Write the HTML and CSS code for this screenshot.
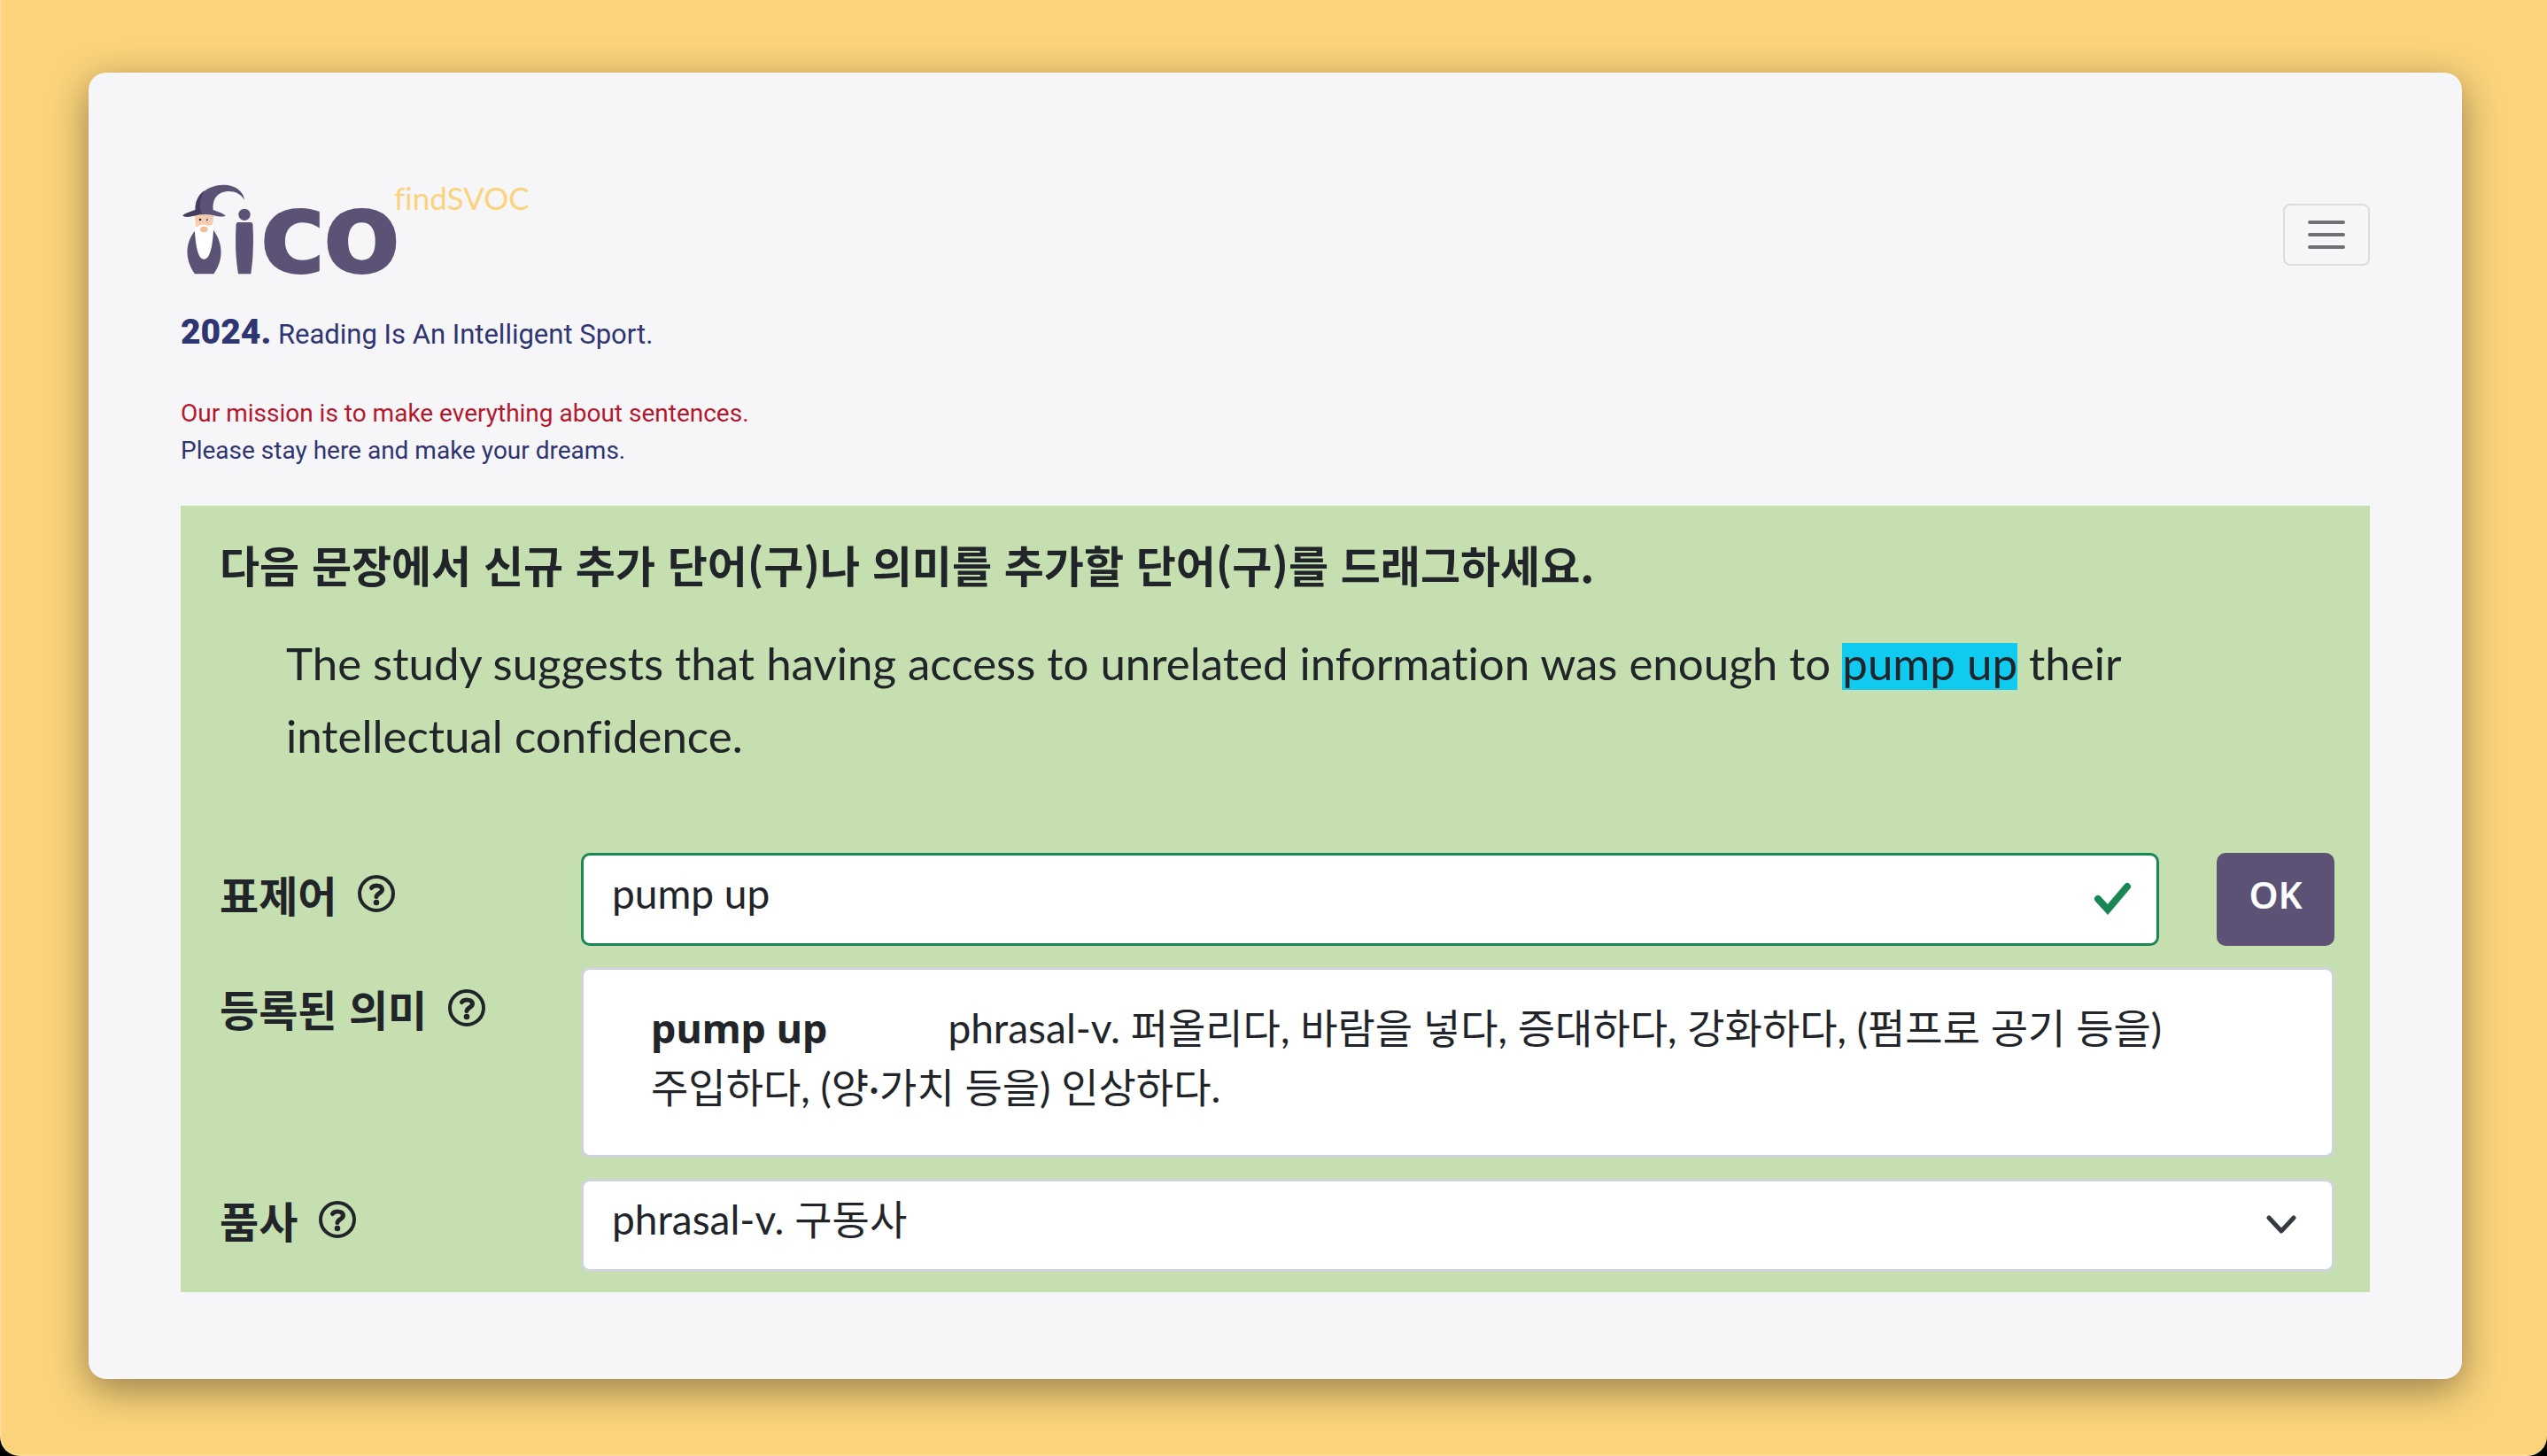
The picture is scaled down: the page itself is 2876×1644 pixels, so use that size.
FILE: index.html
```html
<!DOCTYPE html>
<html lang="ko">
<head>
<meta charset="utf-8">
<meta name="viewport" content="width=device-width, initial-scale=1">
<title>fico findSVOC</title>
<link rel="stylesheet" href="styles.css">
</head>
<body>
<svg class="defs" aria-hidden="true">
  <symbol id="help" viewBox="0 0 42 42">
    <circle cx="21" cy="21" r="19" fill="none" stroke="currentColor" stroke-width="4"/>
    <path d="M15.5 14.5C18 11.5 27 10.500 27.500 16.500C27.500 20.500 21.500 20.500 21 24.500" fill="none" stroke="currentColor" stroke-width="5" stroke-linecap="round"/>
    <circle cx="21" cy="31" r="3.300" fill="currentColor"/>
  </symbol>
</svg>
<div class="window">
  <main class="card">
    <header class="header">
      <a class="logo" href="#" aria-label="fico findSVOC">
        <svg viewBox="12 0 1200 390" width="400" height="130">
          <!-- robe -->
          <path fill="#5b5276" d="M60 182C28 222 24 276 60 328H124C160 276 154 222 122 178Z"/>
          <!-- face and beard -->
          <path fill="#f9cba9" d="M60 128H124L118 178H64Z"/>
          <path fill="#fff" d="M59 164Q66 172 74 164Q91 156 108 166L124 160Q121 250 103 272Q91 284 79 272Q62 250 59 164Z"/>
          <ellipse cx="91" cy="177" rx="13" ry="10" fill="#f3bd98"/>
          <circle cx="78" cy="144" r="4" fill="#2b2533"/>
          <circle cx="103" cy="145" r="7" fill="#f4f1f4" stroke="#b9b2c0" stroke-width="2"/>
          <circle cx="102" cy="145" r="3" fill="#2b2533"/>
          <!-- hat -->
          <path fill="#5b5276" d="M19 131C28 121 46 118 62 111C58 66 100 26 158 26C198 26 226 50 228 77C212 52 186 44 158 50C130 57 119 82 122 111C138 118 156 122 164 131C140 139 122 125 91 127C62 127 42 140 19 131Z"/>
          <path fill="#453c61" d="M19 131C28 121 46 118 62 111C61 82 72 60 92 45C82 62 88 66 78 80C82 90 72 100 84 122C62 127 42 140 19 131Z"/>
          <!-- small figure -->
          <circle cx="228" cy="127" r="20" fill="#5b5276"/>
          <path fill="#5b5276" d="M206 153H250Q255 153 256 160Q262 250 250 328H207Q194 250 200 160Q201 153 206 153Z"/>
          <text class="logo-name" x="278" y="323">c</text>
          <text class="logo-name" x="492" y="323">o</text>
          <text class="logo-tag" x="735" y="111">findSVOC</text>
        </svg>
      </a>
      <button class="menu" type="button" aria-label="Menu">
        <svg width="42" height="32" viewBox="0 0 42 32" stroke="#6f7073" stroke-width="4" stroke-linecap="round"><path d="M2 2H40M2 16H40M2 30H40"/></svg>
      </button>
    </header>
    <p class="slogan"><strong>2024.</strong> Reading Is An Intelligent Sport.</p>
    <p class="mission"><span class="red">Our mission is to make everything about sentences.</span><br>Please stay here and make your dreams.</p>

    <section class="panel">
      <h1 class="title">다음 문장에서 신규 추가 단어(구)나 의미를 추가할 단어(구)를 드래그하세요.</h1>
      <p class="sentence">The study suggests that having access to unrelated information was enough to <mark>pump up</mark> their intellectual confidence.</p>
      <form class="form">
        <div class="label"><label for="word">표제어</label><svg class="help"><use href="#help"/></svg></div>
        <div class="entry">
          <div class="valid">
            <input class="control" id="word" type="text" value="pump up">
            <svg class="check" width="44" height="40" viewBox="0 0 44 40"><path d="M5 20L16 32L38 6" fill="none" stroke="#198754" stroke-width="8" stroke-linecap="round"/></svg>
          </div>
          <button class="ok" type="button">OK</button>
        </div>
        <div class="label"><span>등록된 의미</span><svg class="help"><use href="#help"/></svg></div>
        <div class="meaning"><strong>pump up</strong>phrasal-v. 퍼올리다, 바람을 넣다, 증대하다, 강화하다, (펌프로 공기 등을) 주입하다, (양·가치 등을) 인상하다.</div>
        <div class="label"><label for="pos">품사</label><svg class="help"><use href="#help"/></svg></div>
        <div class="picker">
          <select class="control" id="pos"><option>phrasal-v. 구동사</option></select>
          <svg class="chevron" width="34" height="22" viewBox="0 0 34 22"><path d="M3 3L17 18L31 3" fill="none" stroke="#343a40" stroke-width="5" stroke-linecap="round" stroke-linejoin="round"/></svg>
        </div>
      </form>
    </section>
  </main>
</div>
</body>
</html>
```
FILE: styles.css
```css
* { box-sizing: border-box; }

body {
  margin: 0;
  background: #000;
  color: #212529;
  font-family: Lato, "Noto Sans CJK KR", sans-serif;
}

h1, p { margin: 0; }

.defs { display: none; }

.window {
  min-height: 100vh;
  padding: 82px 96px 84px 98px;
  background: #fad37b;
  border: 0 solid #fcdc95;
  border-width: 0 0 2px 2px;
  border-radius: 0 0 22px 22px;
}

.card {
  padding: 118px 104px 98px;
  background: #f6f6f9;
  border-radius: 20px;
  box-shadow: 0 12px 44px rgba(0, 0, 0, .4);
}

.header {
  display: flex;
  align-items: center;
  justify-content: space-between;
}

.logo svg {
  display: block;
  overflow: visible;
}

.logo-name {
  font: 700 388px "DejaVu Sans", sans-serif;
  fill: #5b5276;
}

.logo-tag {
  font: 400 105px Lato, sans-serif;
  font-variant-ligatures: none;
  fill: #fbd37c;
}

.menu {
  display: flex;
  align-items: center;
  justify-content: center;
  width: 98px;
  height: 70px;
  padding: 0;
  background: none;
  border: 2px solid #dcdcdf;
  border-radius: 8px;
}

.slogan {
  margin-top: 21px;
  color: #2e3572;
  font: 31px/54px Roboto, sans-serif;
}

.slogan strong {
  font-size: 39px;
  font-weight: 900;
  line-height: 40px;
}

.mission {
  margin-top: 41px;
  color: #2e3572;
  font: 28px/42px Roboto, sans-serif;
}

.red { color: #b5172c; }

.panel {
  margin-top: 41px;
  padding: 36px 40px 23px 44px;
  background: #c5dfb1;
}

.title {
  font: 700 49px/60px "Noto Sans CJK KR", sans-serif;
}

.sentence {
  margin-top: 41px;
  padding: 0 75px;
  font-size: 51px;
  font-variant-ligatures: none;
  line-height: 82px;
}

mark {
  color: inherit;
  background: linear-gradient(#11caf0, #11caf0) 0 8px / 100% 54px no-repeat;
}

.form {
  display: grid;
  grid-template-columns: 408px 1fr;
  row-gap: 24px;
  margin-top: 91px;
}

.label {
  display: flex;
  align-items: center;
  gap: 24px;
  height: 92px;
  font: 700 48px "Noto Sans CJK KR", sans-serif;
}

.help {
  width: 42px;
  height: 42px;
}

.entry {
  display: flex;
  gap: 65px;
}

.valid, .picker {
  position: relative;
  flex: 1;
}

.control {
  display: block;
  width: 100%;
  height: 105px;
  padding: 0 32px 14px;
  appearance: none;
  color: inherit;
  font: 46px Lato, "Noto Sans CJK KR", sans-serif;
  background: #fff;
  border: 3px solid #ced4da;
  border-radius: 10px;
}

.valid .control { border-color: #198754; }

.check {
  position: absolute;
  top: 32px;
  right: 30px;
}

.chevron {
  position: absolute;
  top: 41px;
  right: 43px;
}

.ok {
  width: 133px;
  height: 105px;
  padding: 0 0 12px;
  color: #fff;
  font: 600 42px "Noto Sans", sans-serif;
  background: #5b5276;
  border: 0;
  border-radius: 10px;
}

.meaning {
  padding: 32px 76px 43px;
  font-size: 46px;
  line-height: 67px;
  word-break: keep-all;
  background: #fff;
  border: 3px solid #ced4da;
  border-radius: 10px;
}

.meaning strong {
  margin-right: 136px;
  font: 700 45px/46px "Noto Sans", sans-serif;
}
```
